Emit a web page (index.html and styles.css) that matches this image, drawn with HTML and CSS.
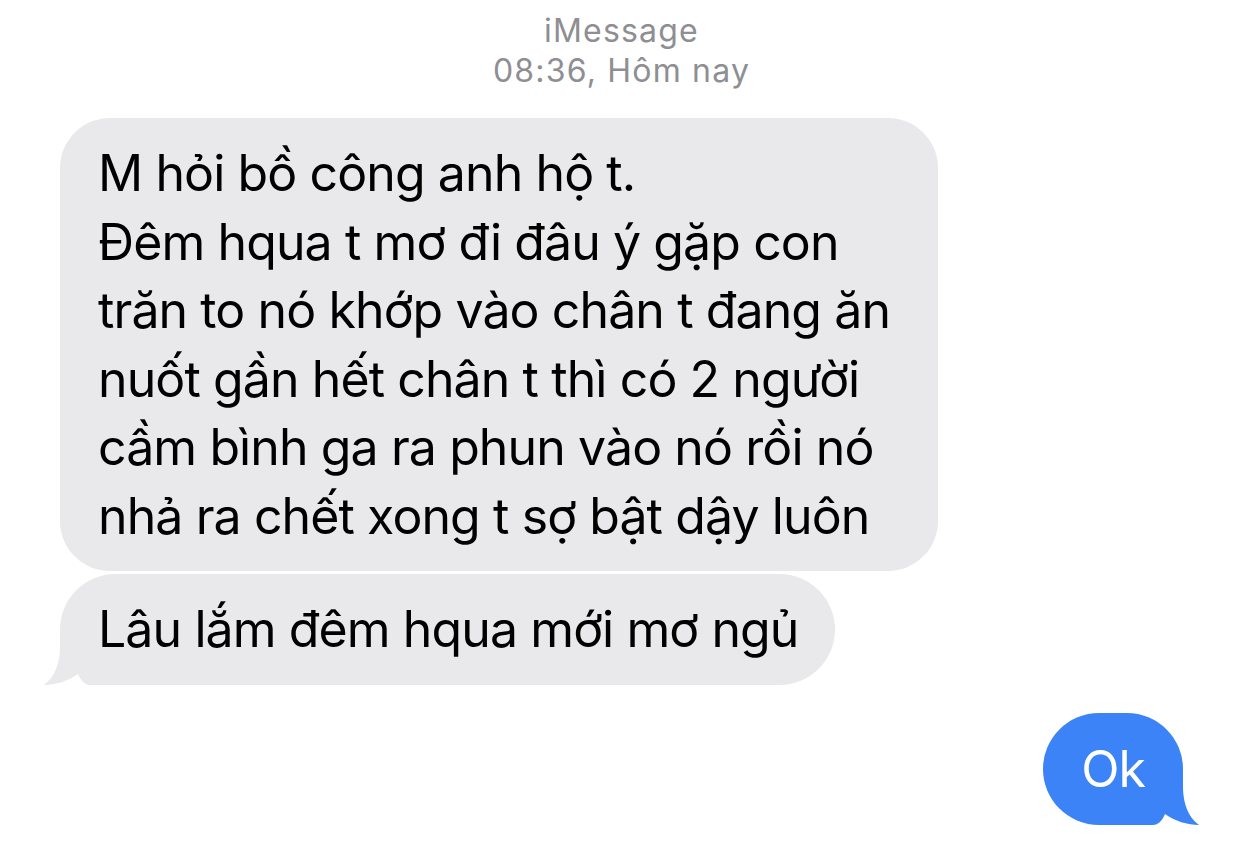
FILE: index.html
```html
<!DOCTYPE html>
<html lang="vi">
<head>
<meta charset="utf-8">
<title>iMessage</title>
<link rel="stylesheet" href="styles.css">
</head>
<body>
<div class="thread">
  <header class="meta">
    <div class="service">iMessage</div>
    <div class="time">08:36, Hôm nay</div>
  </header>

  <div class="row row-in">
    <div class="bubble in wide">M hỏi bồ công anh hộ t.<br>Đêm hqua t mơ đi đâu ý gặp con<br>trăn to nó khớp vào chân t đang ăn<br>nuốt gần hết chân t thì có 2 người<br>cầm bình ga ra phun vào nó rồi nó<br>nhả ra chết xong t sợ bật dậy luôn</div>
  </div>

  <div class="row row-in">
    <div class="bubble in tailed">Lâu lắm đêm hqua mới mơ ngủ<svg class="tail tail-in" width="76" height="56" viewBox="0 0 76 56"><path d="M3.5 56 C10 52 19 42 20 20 L20 0 L76 0 L76 56 L50 56 C45 56 41 52 38 45 C28 52 16 56 3.5 56 Z"/></svg></div>
  </div>

  <div class="row row-out">
    <div class="bubble out tailed">Ok<svg class="tail tail-out" width="76" height="56" viewBox="0 0 76 56"><path d="M3.5 56 C10 52 19 42 20 20 L20 0 L76 0 L76 56 L50 56 C45 56 41 52 38 45 C28 52 16 56 3.5 56 Z"/></svg></div>
  </div>
</div>
</body>
</html>
```

FILE: styles.css
```css
html, body {
  margin: 0;
  padding: 0;
  background: #ffffff;
}

body {
  font-family: "Inter", "Roboto", "Liberation Sans", sans-serif;
  -webkit-font-smoothing: antialiased;
}

.thread {
  display: flex;
  flex-direction: column;
  padding: 11px 59px 0 60px;
}

.meta {
  display: flex;
  flex-direction: column;
  align-items: center;
  color: #8e8e93;
  font-size: 32px;
  line-height: 40px;
  letter-spacing: 1.2px;
}

.row {
  display: flex;
}

.row-in {
  justify-content: flex-start;
}

.row-out {
  justify-content: flex-end;
  margin-top: 28px;
}

.meta + .row {
  margin-top: 27px;
}

.row-in + .row-in {
  margin-top: 3px;
}

.bubble {
  position: relative;
  z-index: 0;
  box-sizing: border-box;
  font-size: 50px;
  line-height: 68.5px;
  letter-spacing: -0.9px;
  padding: 21px 36px 21px 38px;
  border-radius: 56px;
  white-space: nowrap;
}

.bubble.wide {
  width: 878px;
  border-radius: 50px;
}

.in {
  background: #e9e9eb;
  color: #000000;
}

.out {
  background: #3b83f6;
  color: #ffffff;
  padding: 22px 38px 22px 38px;
}

.tail {
  position: absolute;
  z-index: -1;
  bottom: 0;
  display: block;
}

.tail-in {
  left: -20px;
}

.tail-in path {
  fill: #e9e9eb;
}

.tail-out {
  right: -20px;
  transform: scaleX(-1);
}

.tail-out path {
  fill: #3b83f6;
}
```
